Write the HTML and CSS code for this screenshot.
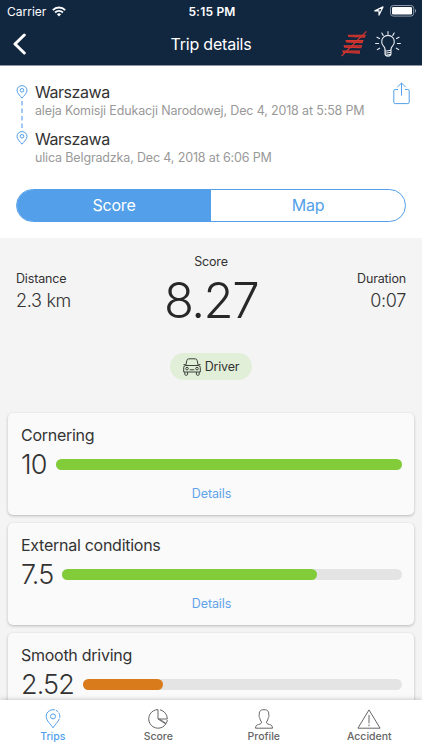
FILE: index.html
```html
<!DOCTYPE html>
<html lang="en">
<head>
    <meta charset="UTF-8">
    <meta name="viewport" content="width=device-width, initial-scale=1.0">
    <title>Trip details</title>
    <link rel="stylesheet" href="styles.css">
</head>
<body>
    <header class="header">
        <div class="status">
            <div class="carrier">
                <span>Carrier</span>
                <svg width="14" height="11" viewBox="0 0 14 11" fill="none" stroke="#fff" stroke-width="1.9">
                    <path d="M.8 4.1a8.8 8.8 0 0 1 12.4 0M3.1 6.5a5.5 5.5 0 0 1 7.8 0"/>
                    <path d="M7 10.4L4.9 8.3a3 3 0 0 1 4.2 0z" fill="#fff" stroke="none"/>
                </svg>
            </div>
            <span class="time">5:15 PM</span>
            <div class="battery">
                <svg width="10" height="10" viewBox="0 0 10 10" fill="none" stroke="#fff" stroke-width="1.2" stroke-linejoin="round">
                    <path d="M.8 4.9L9 .9 5 9.1V4.9z"/>
                </svg>
                <svg width="27" height="12" viewBox="0 0 27 12">
                    <rect x=".5" y=".5" width="23.2" height="10.6" rx="2.8" fill="none" stroke="#8e99a7"/>
                    <rect x="2" y="2" width="20" height="7.6" rx="1.3" fill="#fff"/>
                    <path d="M25 4v3.8c1.5-.6 1.5-3.2 0-3.8z" fill="#8e99a7"/>
                </svg>
            </div>
        </div>
        <div class="navbar">
            <svg class="back" width="14" height="22" viewBox="0 0 14 22" fill="none" stroke="#fff" stroke-width="3" stroke-linecap="round" stroke-linejoin="round">
                <path d="M11.3 2L2 11l9.3 9"/>
            </svg>
            <h1>Trip details</h1>
            <div class="actions">
                <svg width="26" height="26" viewBox="0 0 26 26" fill="none" stroke="#d6372f" stroke-width="1.1">
                    <path d="M.6 25L25.4.4"/>
                    <path d="M7.4 4.2h16.8l-.8 1.9-15.5-.6zM5.2 9.6h16.6l-.8 2-15.3-.7zM3.2 14.8h17.3l-.8 1.9-16-.6zM1.9 20h16.4v2.2L2.2 21.2z" fill="#a52b2b"/>
                </svg>
                <svg width="26" height="26" viewBox="0 0 26 26" fill="none" stroke="#e9edf2" stroke-width="1.1" stroke-linecap="round">
                    <path d="M10 18.2c0-1.6-.7-2.2-1.5-3.1a6.3 6.3 0 1 1 9 0c-.8.9-1.5 1.5-1.5 3.1"/>
                    <path d="M10 20.3l6-1M10 22.2l6-1M11 24.3l4.5-1M10 18.6v4q0 2.6 3 2.6t3-2.6v-4"/>
                    <path d="M13 .6v2.6M6.8 2l1.4 2.4M19.2 2l-1.4 2.4M2 6.2l2.5 1.4M24 6.2l-2.5 1.4M.6 12.5h3M22.4 12.5h3M2.3 18.6l2.3-1.4M23.7 18.6l-2.3-1.4"/>
                </svg>
            </div>
        </div>
    </header>

    <section class="trip">
        <div class="route">
            <div class="track">
                <svg width="12" height="14" viewBox="0 0 12 14" fill="none" stroke="#539fe9">
                    <path d="M6 13.2C4.8 11.3 1 8.6 1 5.4a5 4.8 0 0 1 10 0c0 3.2-3.8 5.9-5 7.8z"/>
                    <circle cx="6" cy="5.3" r="1.8"/>
                </svg>
                <svg width="2" height="32" viewBox="0 0 2 32" stroke="#539fe9" stroke-width="1.1" stroke-dasharray="4.5 3">
                    <path d="M1 2v28"/>
                </svg>
                <svg width="12" height="14" viewBox="0 0 12 14" fill="none" stroke="#539fe9">
                    <path d="M6 13.2C4.8 11.3 1 8.6 1 5.4a5 4.8 0 0 1 10 0c0 3.2-3.8 5.9-5 7.8z"/>
                    <circle cx="6" cy="5.3" r="1.8"/>
                </svg>
            </div>
            <div class="stops">
                <div class="stop">
                    <h2>Warszawa</h2>
                    <p>aleja Komisji Edukacji Narodowej, Dec 4, 2018 at 5:58 PM</p>
                </div>
                <div class="stop">
                    <h2>Warszawa</h2>
                    <p>ulica Belgradzka, Dec 4, 2018 at 6:06 PM</p>
                </div>
            </div>
            <svg class="share" width="17" height="23" viewBox="0 0 17 23" fill="none" stroke="#539fe9">
                <path d="M5 7.5H2.2Q.8 7.5.8 9v11.2q0 1.4 1.4 1.4h12.6q1.4 0 1.4-1.4V9q0-1.5-1.4-1.5H12M8.5 13.5V1M4.4 5.1L8.5 1l4.1 4.1"/>
            </svg>
        </div>
        <div class="switch">
            <div class="option active">Score</div>
            <div class="option">Map</div>
        </div>
    </section>

    <main class="content">
        <div class="summary">
            <div class="stat">
                <span class="label">Distance</span>
                <span class="value">2.3 km</span>
            </div>
            <div class="total">
                <span class="label">Score</span>
                <span class="points">8.27</span>
            </div>
            <div class="stat right">
                <span class="label">Duration</span>
                <span class="value">0:07</span>
            </div>
        </div>
        <div class="driver">
            <svg width="18" height="18" viewBox="0 0 18 18" fill="none" stroke="#3c413a">
                <path d="M2.8 7.5l1-4.8Q4.1.8 5.8.8h6.4q1.7 0 2 1.9l1 4.8M.7 14V9.6q0-2.1 2.1-2.1h12.4q2.1 0 2.1 2.1V14zM.5 6.6h2M15.5 6.6h2M1.8 14v2.3q0 1 1.4 1t1.4-1V14M13.4 14v2.3q0 1 1.4 1t1.4-1V14M6.7 11.8h4.6"/>
                <circle cx="4" cy="10.6" r="1.3"/>
                <circle cx="14" cy="10.6" r="1.3"/>
            </svg>
            <span>Driver</span>
        </div>

        <div class="card">
            <h3>Cornering</h3>
            <div class="rating">
                <span class="number">10</span>
                <div class="bar"><div class="fill" style="width: 100%"></div></div>
            </div>
            <a class="details">Details</a>
        </div>
        <div class="card">
            <h3>External conditions</h3>
            <div class="rating">
                <span class="number">7.5</span>
                <div class="bar"><div class="fill" style="width: 75%"></div></div>
            </div>
            <a class="details">Details</a>
        </div>
        <div class="card">
            <h3>Smooth driving</h3>
            <div class="rating">
                <span class="number">2.52</span>
                <div class="bar"><div class="fill orange" style="width: 25.2%"></div></div>
            </div>
        </div>
    </main>

    <nav class="tabs">
        <div class="tab current">
            <svg width="20" height="20" viewBox="0 0 20 20" fill="none" stroke="#539fe9">
                <path d="M10 18.8C8 15.4 3.2 11.8 3.2 7.3A6.8 6.6 0 0 1 10 .7a6.8 6.6 0 0 1 6.8 6.6c0 4.5-4.8 8.1-6.8 11.5z" stroke-dasharray="26 1 3 1 5 1"/>
                <circle cx="10" cy="7.4" r="2.5"/>
            </svg>
            <span>Trips</span>
        </div>
        <div class="tab">
            <svg width="20" height="20" viewBox="0 0 20 20" fill="none" stroke="#666">
                <path d="M10 .6A9.3 9.3 0 1 0 17.8 15L10 10zM12 .8A9.3 9.3 0 0 1 19.3 10H10M19.3 11a9 9 0 0 1-1.2 3.6L11.5 10"/>
            </svg>
            <span>Score</span>
        </div>
        <div class="tab">
            <svg width="20" height="20" viewBox="0 0 20 20" fill="none" stroke="#666">
                <path d="M7.6 13c-1.2-1.3-1.7-2.8-1.8-4.3C4.7 8 4.8 6.8 5.3 6.3 4.9 2.7 6 .7 10 .7s5.1 2 4.7 5.6c.5.5.6 1.7-.5 2.4-.1 1.5-.6 3-1.8 4.3.1 1.4.7 1.8 3 2.5 2.2.6 3 1.5 3.1 3.7h-17c.1-2.2.9-3.1 3.1-3.7 2.3-.7 2.9-1.1 3-2.5z"/>
            </svg>
            <span>Profile</span>
        </div>
        <div class="tab">
            <svg width="24" height="20" viewBox="0 0 24 20" fill="none" stroke="#666">
                <path d="M12 .9L.9 19.2h22.2zM12 6v8.3M12 15.5v1.7"/>
            </svg>
            <span>Accident</span>
        </div>
    </nav>
</body>
</html>
```

FILE: styles.css
```css
* {
    box-sizing: border-box;
}
body {
    margin: 0;
    height: 750px;
    overflow: hidden;
    display: flex;
    flex-direction: column;
    font-family: Inter, "Liberation Sans", sans-serif;
    color: #333;
    background-color: #f4f4f4;
}
svg {
    display: block;
    flex: none;
}
h1, h2, h3, p {
    margin: 0;
    font-weight: 400;
}
.header {
    flex: none;
    height: 66px;
    color: white;
    background-color: #11263f;
    border-bottom: 1px solid #8b96a2;
}
.status {
    height: 22px;
    padding: 0 5px 0 7px;
    display: grid;
    grid-template-columns: 1fr auto 1fr;
    align-items: center;
    font-size: 12px;
}
.carrier {
    display: flex;
    align-items: center;
    gap: 6px;
}
.time {
    font-weight: 600;
    letter-spacing: 0.2px;
}
.battery {
    display: flex;
    justify-content: flex-end;
    align-items: center;
    gap: 6px;
}
.navbar {
    height: 43px;
    padding: 0 21px 0 13px;
    display: grid;
    grid-template-columns: 1fr auto 1fr;
    align-items: center;
}
.navbar h1 {
    font-size: 16px;
    letter-spacing: -0.2px;
    margin-left: 8px;
}
.actions {
    display: flex;
    justify-content: flex-end;
    gap: 8px;
}
.trip {
    flex: none;
    height: 172px;
    padding: 16px 16px 0;
    background-color: white;
}
.route {
    display: flex;
    height: 107px;
}
.track {
    width: 12px;
    margin-right: 7px;
    padding-top: 3px;
    display: flex;
    flex-direction: column;
    align-items: center;
}
.stops {
    flex: 1;
}
.stop {
    height: 46.5px;
    white-space: nowrap;
}
.stop h2 {
    font-size: 16px;
    line-height: 20px;
    letter-spacing: -0.45px;
}
.stop p {
    font-size: 12.5px;
    line-height: 18px;
    letter-spacing: -0.15px;
    color: #999;
}
.share {
    margin-right: -4px;
}
.switch {
    height: 33px;
    display: flex;
    border: 1px solid #539fe9;
    border-radius: 17px;
    overflow: hidden;
}
.option {
    flex: 1;
    line-height: 31px;
    text-align: center;
    font-size: 16px;
    letter-spacing: -0.2px;
    color: #539fe9;
}
.option.active {
    color: white;
    background-color: #539fe9;
}
.content {
    flex: 1;
    min-height: 0;
    overflow: hidden;
    padding: 0 8px;
}
.summary {
    height: 115px;
    padding: 0 8px;
    display: grid;
    grid-template-columns: 1fr auto 1fr;
}
.label {
    font-size: 12.5px;
    line-height: 18px;
    letter-spacing: -0.15px;
}
.stat {
    display: flex;
    flex-direction: column;
    padding-top: 32px;
}
.right {
    align-items: flex-end;
}
.value {
    font-size: 18px;
    line-height: 26px;
    font-weight: 300;
    letter-spacing: -0.3px;
}
.total {
    padding-top: 15px;
    display: flex;
    flex-direction: column;
    align-items: center;
}
.points {
    font-size: 49px;
    line-height: 60px;
    font-weight: 300;
    letter-spacing: -1.5px;
    color: #282828;
}
.driver {
    width: 82px;
    height: 27px;
    margin: 0 auto 33px;
    border-radius: 14px;
    display: flex;
    align-items: center;
    justify-content: center;
    gap: 4px;
    font-size: 12.5px;
    letter-spacing: -0.2px;
    background-color: #e2efd8;
}
.card {
    height: 102px;
    margin-bottom: 8px;
    padding: 12px 12px 0 13px;
    border-radius: 5px;
    background-color: #fafafa;
    box-shadow: 0 1px 3px rgba(0, 0, 0, 0.25);
}
.card h3 {
    font-size: 16px;
    line-height: 20px;
    letter-spacing: -0.27px;
}
.rating {
    height: 38px;
    display: flex;
    align-items: center;
}
.number {
    font-size: 27px;
    line-height: 38px;
    font-weight: 300;
    letter-spacing: -0.9px;
    margin-right: 9px;
    padding-top: 1px;
}
.bar {
    flex: 1;
    height: 11px;
    border-radius: 6px;
    background-color: #e4e4e4;
}
.fill {
    height: 100%;
    border-radius: 6px;
    background-color: #82cc3a;
}
.fill.orange {
    background-color: #da7b1b;
}
.details {
    display: block;
    padding-top: 1px;
    text-align: center;
    font-size: 12.5px;
    line-height: 20px;
    letter-spacing: -0.1px;
    color: #5fa3ea;
}
.tabs {
    flex: none;
    height: 50px;
    padding-top: 9px;
    display: flex;
    background-color: white;
    box-shadow: 0 0 5px rgba(0, 0, 0, 0.25);
    z-index: 1;
}
.tab {
    flex: 1;
    display: flex;
    flex-direction: column;
    align-items: center;
    font-size: 10.5px;
    font-weight: 500;
    line-height: 16px;
    color: #666;
}
.tab.current {
    color: #539fe9;
}
```
